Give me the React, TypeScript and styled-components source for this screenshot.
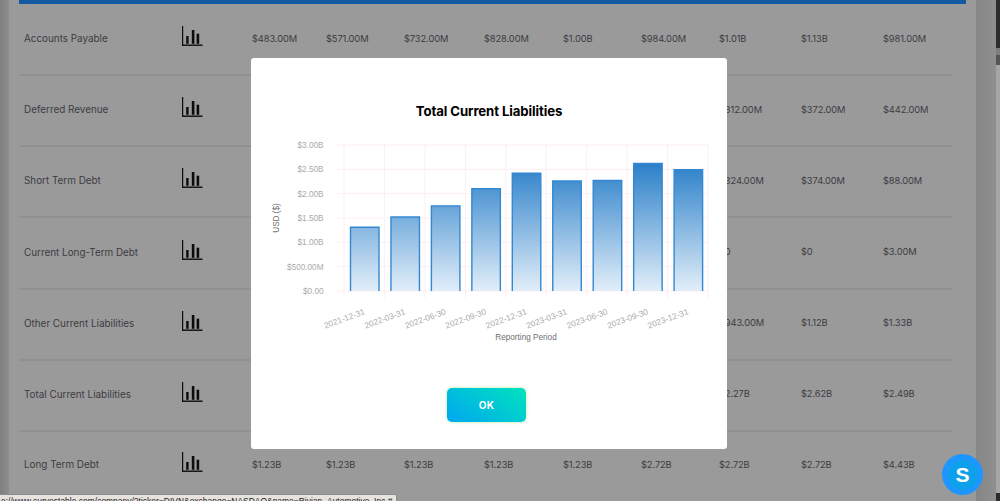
import React from "react";
import styled, { createGlobalStyle } from "styled-components";

const Global = createGlobalStyle`
  html, body { margin: 0; padding: 0; width: 1000px; height: 501px; overflow: hidden; background: #9a9a9a; }
  #root { width: 1000px; height: 501px; }
`;
const Stage = styled.div`
  position: relative; width: 1000px; height: 501px; overflow: hidden; display: flex;
  font-family: Inter, "Open Sans", sans-serif; background: #9a9a9a;
`;
const Gutter = styled.div`
  width: 9px; flex: none;
  background: linear-gradient(90deg, #7f7f7f, #8e8e8e);
`;
const Page = styled.main`
  width: 967px; flex: none; box-sizing: border-box; padding: 0 10px; background: #9a9a9a;
`;
const Rail = styled.div`
  width: 20px; flex: none; background: linear-gradient(90deg, #868686, #8f8f8f);
`;
const Strip = styled.div`
  flex: 1; display: flex; flex-direction: column;
`;
const StripPart = styled.div<{ $h: number; $c: string }>`
  height: ${p => p.$h}px; flex: none; background: ${p => p.$c};
`;
const TopBar = styled.div`
  height: 4.4px; margin-bottom: 0.6px; background: #12599f;
`;
const Row = styled.div<{ $last?: boolean }>`
  height: 71.17px; box-sizing: border-box; display: grid; align-items: center; margin-right: 14px;
  padding: 0 0 ${p => (p.$last ? "7px" : "3px")} 5px;
  grid-template-columns: 158px 70px 74px 78px 80px 79px 78px 78px 82px 82px 1fr;
  border-bottom: ${p => (p.$last ? "none" : "2px solid #919191")};
  font-size: 9.3px; letter-spacing: -0.1px; color: #3c3c42; white-space: nowrap;
`;
const Name = styled.div`font-size: 9.9px; letter-spacing: 0;`;
const Val = styled.div``;
const IconWrap = styled.div`display: flex; margin: 0 0 4px -0.5px;`;
const Overlay = styled.div`
  position: absolute; inset: 0; display: flex; align-items: flex-start; padding: 58px 0 0 251px; pointer-events: none;
`;
const Modal = styled.section`
  position: relative; width: 476px; height: 391px; background: #fff; border-radius: 3px;
  box-sizing: border-box; display: flex; flex-direction: column; align-items: center;
`;
const Title = styled.h2`
  margin: 44px 0 0; font: 700 13.2px/18px Inter, sans-serif; color: #000; letter-spacing: -0.1px; white-space: nowrap;
`;
const OkButton = styled.button`
  margin: auto 5px 27px 0; width: 79px; height: 34px; border: 0; border-radius: 5px;
  background: linear-gradient(35deg, #00a7f0 0%, #00e3bd 100%);
  box-shadow: 0 0 3px 1px #d3f3c8;
  color: #fff; font: 700 10px Inter, sans-serif; letter-spacing: 0.3px;
`;
const Tip = styled.div`
  position: absolute; left: -3px; top: 494px; width: 400px; height: 12px; background: #e6e3df; border: 1px solid #8d8d8d; border-radius: 2px;
  font: 8.4px/12px "Liberation Sans", sans-serif; letter-spacing: 0.05px; color: #222; white-space: nowrap; overflow: hidden; box-sizing: border-box; padding-left: 3px;
`;
const Badge = styled.div`
  position: absolute; left: 942px; top: 454px; width: 41px; height: 41px; border-radius: 50%; background: #1e96ff;
  display: flex; align-items: center; justify-content: center;
`;
const BadgeInner = styled.div`
  width: 30px; height: 30px; border-radius: 50%; background: #0ea0ea; color: #fff;
  display: flex; align-items: center; justify-content: center; font: 700 21px "Liberation Sans", sans-serif;
`;
const ChartSvg = styled.svg`position: absolute; left: 0; top: 0; pointer-events: none;`;

const BarIcon = () => (
  <svg width="21" height="20" viewBox="0 0 21 20" fill="#0c0c0c">
    <rect x="0" y="0" width="1.2" height="20" />
    <rect x="0" y="18.5" width="20.5" height="1.4" />
    <rect x="4.2" y="10" width="2.4" height="7.8" />
    <rect x="9.8" y="4" width="2.6" height="13.8" />
    <rect x="14.6" y="7.7" width="2.6" height="10.1" />
  </svg>
);

const rows: [string, string[]][] = [
  ["Accounts Payable", ["$483.00M", "$571.00M", "$732.00M", "$828.00M", "$1.00B", "$984.00M", "$1.01B", "$1.13B", "$981.00M"]],
  ["Deferred Revenue", ["", "", "", "", "", "", "$312.00M", "$372.00M", "$442.00M"]],
  ["Short Term Debt", ["", "", "", "", "", "", "$324.00M", "$374.00M", "$88.00M"]],
  ["Current Long-Term Debt", ["", "", "", "", "", "", "$0", "$0", "$3.00M"]],
  ["Other Current Liabilities", ["", "", "", "", "", "", "$943.00M", "$1.12B", "$1.33B"]],
  ["Total Current Liabilities", ["", "", "", "", "", "", "$2.27B", "$2.62B", "$2.49B"]],
  ["Long Term Debt", ["$1.23B", "$1.23B", "$1.23B", "$1.23B", "$1.23B", "$2.72B", "$2.72B", "$2.72B", "$4.43B"]],
];

const ys = ["$3.00B", "$2.50B", "$2.00B", "$1.50B", "$1.00B", "$500.00M", "$0.00"];
const bars = [1.31, 1.52, 1.75, 2.1, 2.42, 2.26, 2.27, 2.62, 2.49];
const dates = ["2021-12-31", "2022-03-31", "2022-06-30", "2022-09-30", "2022-12-31", "2023-03-31", "2023-06-30", "2023-09-30", "2023-12-31"];
const CX0 = 345, CW = 40.45, Y0 = 291, YT = 145;
const yOf = (v: number) => Y0 - ((Y0 - YT) * v) / 3;
const LABEL_FONT = "Liberation Sans, sans-serif";

const Chart = () => (
  <ChartSvg width="476" height="391" viewBox="251 58 476 391">
    <defs>
      <linearGradient id="barfill" gradientUnits="userSpaceOnUse" x1="0" y1={yOf(2.62)} x2="0" y2={Y0}>
        <stop offset="0" stopColor="#2b80c9" />
        <stop offset="1" stopColor="#e2eef9" />
      </linearGradient>
    </defs>
    {ys.map((_, i) => {
      const y = YT + (i * (Y0 - YT)) / 6;
      return <line key={i} x1="337" x2="708" y1={y} y2={y} stroke="#fdeef3" strokeWidth="1" />;
    })}
    {Array.from({ length: 10 }).map((_, i) => {
      const x = 344 + i * CW;
      return <line key={i} x1={x} x2={x} y1={YT} y2={Y0 + 7} stroke="#fdeef3" strokeWidth="1" />;
    })}
    {bars.map((v, i) => {
      const x = CX0 + 5.5 + i * CW;
      const y = yOf(v);
      return (
        <path key={i} d={`M${x} ${Y0}V${y}H${x + 28.5}V${Y0}`} fill="url(#barfill)" stroke="#3488d2" strokeWidth="1.4" />
      );
    })}
    {ys.map((t, i) => (
      <text key={t} x="323.5" y={YT + (i * (Y0 - YT)) / 6 + 3} textAnchor="end" fontFamily={LABEL_FONT} fontSize="8.2" fill="#aaa">{t}</text>
    ))}
    <text transform="translate(279 218) rotate(-90)" textAnchor="middle" fontFamily={LABEL_FONT} fontSize="8.2" fill="#6f6f6f">USD ($)</text>
    {dates.map((d, i) => (
      <text key={d} transform={`translate(${365.5 + i * CW} 314) rotate(-20)`} textAnchor="end" fontFamily={LABEL_FONT} fontSize="8.4" fill="#aaa">{d}</text>
    ))}
    <text x="526" y="340" textAnchor="middle" fontFamily={LABEL_FONT} fontSize="8.2" fill="#6f6f6f">Reporting Period</text>
  </ChartSvg>
);

export default function App() {
  return (
    <Stage>
      <Global />
      <Gutter />
      <Page>
        <TopBar />
        {rows.map(([n, v], i) => (
          <Row key={n} $last={i === rows.length - 1}>
            <Name>{n}</Name>
            <IconWrap><BarIcon /></IconWrap>
            {v.map((x, j) => <Val key={j}>{x}</Val>)}
          </Row>
        ))}
      </Page>
      <Rail />
      <Strip>
        <StripPart $h={48} $c="#2c2c2c" />
        <StripPart $h={7} $c="#7d7d7d" />
        <StripPart $h={10} $c="#555" />
        <StripPart $h={428} $c="#a6a6a6" />
        <StripPart $h={8} $c="#2c2c2c" />
      </Strip>
      <Overlay>
        <Modal>
          <Chart />
          <Title>Total Current Liabilities</Title>
          <OkButton>OK</OkButton>
        </Modal>
      </Overlay>
      <Tip>e://www.curvestable.com/company/?ticker=DIVN&amp;exchange=NASDAQ&amp;name=Rivian_Automotive_Inc.#</Tip>
      <Badge><BadgeInner>S</BadgeInner></Badge>
    </Stage>
  );
}
